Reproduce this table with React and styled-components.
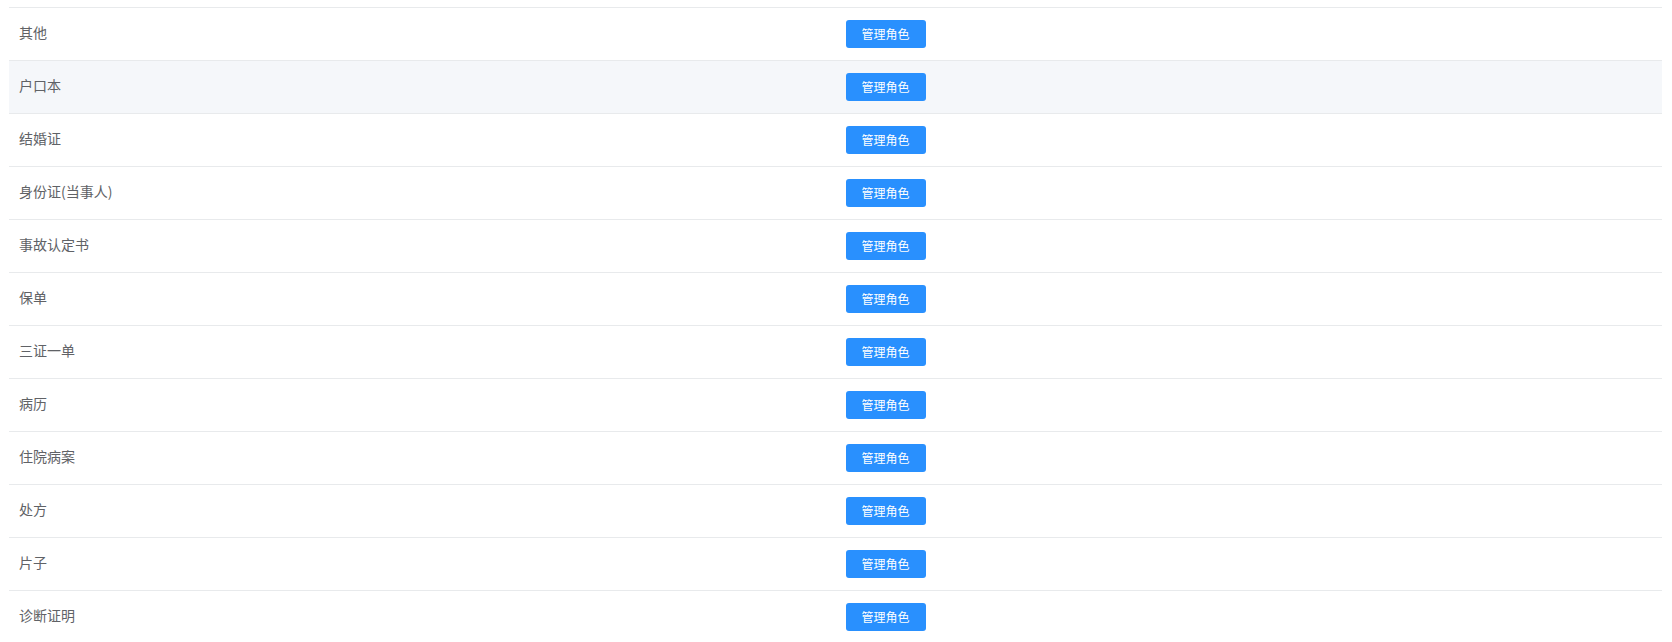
import React from "react";
import styled, { createGlobalStyle } from "styled-components";

const Global = createGlobalStyle`
  html, body { margin: 0; padding: 0; background: #fff; }
  body { font-family: "Noto Sans CJK SC", "Noto Sans", sans-serif; }
`;

const Page = styled.div`
  padding: 7px 10px 0 9px;
`;

const Table = styled.div`
  border-top: 1px solid #e8eaec;
`;

const Row = styled.div`
  display: grid;
  grid-template-columns: 1fr 1fr;
  height: 52px;
  border-bottom: 1px solid #e8eaec;
  background: ${(p) => (p.$striped ? "#f5f7fa" : "#fff")};
`;

const Cell = styled.div`
  display: flex;
  align-items: center;
  padding: 0 10px;
  font-size: 14px;
  color: #606266;
`;

const Label = styled.span`
  display: block;
  padding-bottom: 4px;
`;

const Button = styled.button`
  height: 28px;
  width: 80px;
  padding: 0 0 2px;
  border: none;
  border-radius: 3px;
  background: #2990fe;
  color: #fff;
  font-family: "Noto Sans CJK SC", sans-serif;
  font-size: 12px;
  cursor: pointer;
`;

const items = [
  "其他",
  "户口本",
  "结婚证",
  "身份证(当事人)",
  "事故认定书",
  "保单",
  "三证一单",
  "病历",
  "住院病案",
  "处方",
  "片子",
  "诊断证明",
];

export default function App() {
  return (
    <>
      <Global />
      <Page>
        <Table>
          {items.map((name, i) => (
            <Row key={name} $striped={i === 1}>
              <Cell>
                <Label>{name}</Label>
              </Cell>
              <Cell>
                <Button>管理角色</Button>
              </Cell>
            </Row>
          ))}
        </Table>
      </Page>
    </>
  );
}
